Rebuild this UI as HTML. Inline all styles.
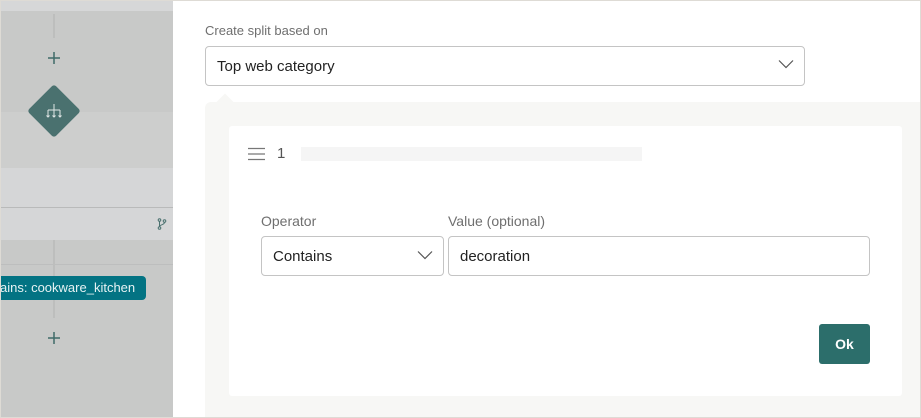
<!DOCTYPE html>
<html><head><style>
*{box-sizing:border-box;margin:0;padding:0}
body{width:921px;height:418px;overflow:hidden;background:#fff;font-family:"Liberation Sans",sans-serif;position:relative}
.a{position:absolute}
.lbl{font-size:13px;color:#6f6f6f}
.inp{border:1px solid #c4c4c4;border-radius:4px;background:#fff;font-size:15px;color:#222;padding-left:11px;display:flex;align-items:center}
</style></head><body>
<div class="a" style="left:0;top:0;width:921px;height:418px;border:1px solid #dedbd5;z-index:10;pointer-events:none"></div>
<div class="a" style="left:0;top:0;width:173px;height:418px;background:#c8c9c8"></div>
<div class="a" style="left:0;top:0;width:173px;height:11px;background:#d6d7d8"></div>
<div class="a" style="left:0;top:112px;width:173px;height:56px;background:#cdcecd"></div>
<div class="a" style="left:0;top:168px;width:173px;height:72px;background:#d5d6d7"></div>
<div class="a" style="left:0;top:207px;width:173px;height:1px;background:#b9baba"></div>
<div class="a" style="left:0;top:264px;width:173px;height:1px;background:#bdbebe"></div>
<div class="a" style="left:53px;top:14px;width:2px;height:24px;background:#bdbebd"></div>
<div class="a" style="left:53px;top:240px;width:2px;height:78px;background:#bdbebd"></div>
<svg class="a" style="left:47px;top:51px" width="14" height="14" stroke="#3f6b69" stroke-width="1.5"><path d="M7 1v12M1 7h12"/></svg>
<svg class="a" style="left:47px;top:331px" width="14" height="14" stroke="#3f6b69" stroke-width="1.5"><path d="M7 1v12M1 7h12"/></svg>
<div class="a" style="left:35px;top:92px;width:38px;height:38px;background:#4a716f;transform:rotate(45deg);border-radius:3px"></div>
<svg class="a" style="left:44px;top:102px" width="20" height="20" viewBox="0 0 20 20" fill="none" stroke="#e0e6e5" stroke-width="1"><path d="M10 2v6M4 8h12M4 8v7M10 8v7M16 8v7M2.5 13.5L4 15l1.5-1.5M8.5 13.5L10 15l1.5-1.5M14.5 13.5L16 15l1.5-1.5"/></svg>
<svg class="a" style="left:157px;top:218px" width="10" height="12" viewBox="0 0 10 12" fill="none" stroke="#4a716f" stroke-width="1"><circle cx="2.5" cy="2" r="1.3"/><circle cx="2.5" cy="10" r="1.3"/><circle cx="7.5" cy="3" r="1.3"/><path d="M2.5 3.3v5.4M7.5 4.3c0 3-5 2-5 4.4"/></svg>
<div class="a" style="left:-4px;top:276px;width:150px;height:24px;background:#037383;border-radius:4px;color:#e6f2f3;font-size:13px;line-height:24px;padding-left:4px;white-space:nowrap">ains: cookware_kitchen</div>
<div class="a lbl" style="left:205px;top:23px">Create split based on</div>
<div class="a inp" style="left:205px;top:46px;width:600px;height:40px">Top web category</div>
<svg class="a" style="left:778px;top:59px" width="16" height="10" viewBox="0 0 16 10" fill="none" stroke="#555" stroke-width="1.2"><path d="M1 1.5l7 7 7-7"/></svg>
<div class="a" style="left:205px;top:102px;width:716px;height:316px;background:#f7f7f5;border-top-left-radius:6px"></div>
<div class="a" style="left:219px;top:96px;width:12px;height:12px;background:#f7f7f5;transform:rotate(45deg)"></div>
<div class="a" style="left:229px;top:126px;width:673px;height:270px;background:#fff;border-radius:3px"></div>
<svg class="a" style="left:248px;top:147px" width="18" height="14" viewBox="0 0 18 14" stroke="#777" stroke-width="1.2"><path d="M0 1.5h17M0 7h17M0 12.5h17"/></svg>
<div class="a" style="left:277px;top:145px;font-size:15px;color:#555">1</div>
<div class="a" style="left:301px;top:147px;width:341px;height:14px;background:#f5f5f5"></div>
<div class="a lbl" style="left:261px;top:213px;font-size:14px">Operator</div>
<div class="a lbl" style="left:448px;top:213px;font-size:14px">Value (optional)</div>
<div class="a inp" style="left:261px;top:236px;width:183px;height:40px">Contains</div>
<svg class="a" style="left:417px;top:250px" width="16" height="10" viewBox="0 0 16 10" fill="none" stroke="#555" stroke-width="1.2"><path d="M1 1.5l7 7 7-7"/></svg>
<div class="a inp" style="left:448px;top:236px;width:422px;height:40px">decoration</div>
<div class="a" style="left:819px;top:324px;width:51px;height:40px;background:#2c6e6b;border-radius:3px;color:#fff;font-size:14px;font-weight:bold;display:flex;align-items:center;justify-content:center">Ok</div>
</body></html>
